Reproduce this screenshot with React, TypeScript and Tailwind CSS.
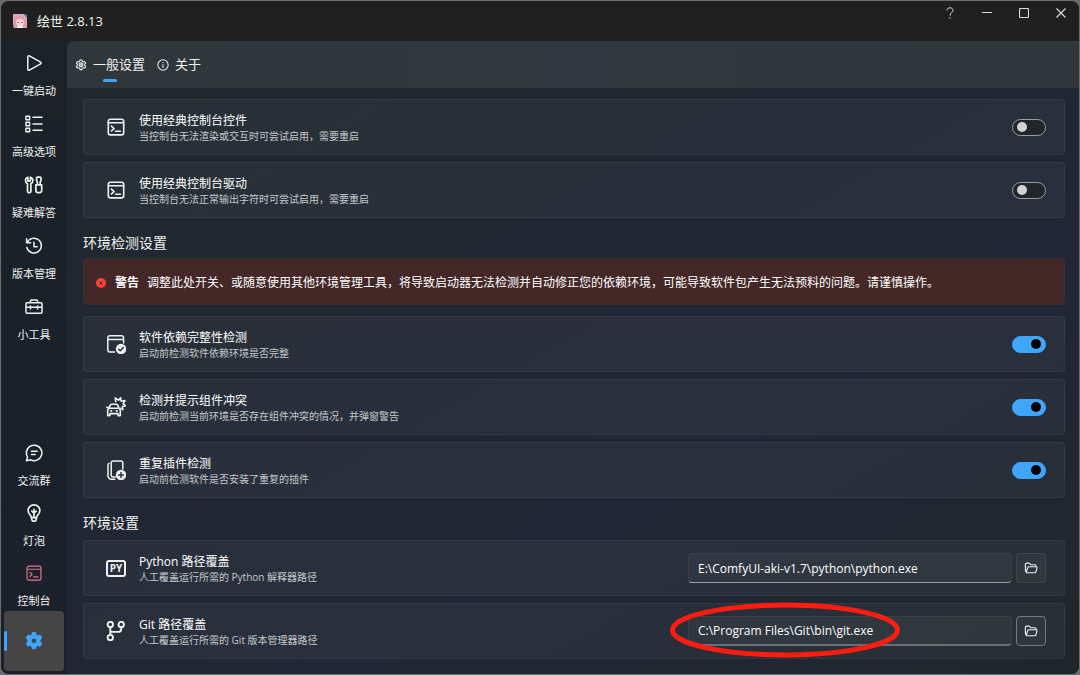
import { useState } from 'react';
import type { ReactNode } from 'react';

interface IconProps {
    children: ReactNode;
    className?: string;
    width?: number;
}

function Icon({ children, className = 'size-5', width = 1.5 }: IconProps) {
    return (
        <svg
            viewBox="0 0 20 20"
            className={className}
            fill="none"
            stroke="currentColor"
            strokeWidth={width}
            strokeLinecap="round"
            strokeLinejoin="round"
            aria-hidden="true"
        >
            {children}
        </svg>
    );
}

const PlayIcon = () => (
    <Icon>
        <path d="M3.8 3.7v12.6c0 .8.9 1.3 1.6.9l11.2-6.3c.7-.4.7-1.4 0-1.8L5.400 2.800c-.7-.4-1.600.1-1.600.9z" />
    </Icon>
);

const ListIcon = () => (
    <Icon>
        <rect x="2" y="2.2" width="3.6" height="3.6" />
        <rect x="2" y="8.2" width="3.6" height="3.6" />
        <rect x="2" y="14.2" width="3.6" height="3.6" />
        <path d="M9 3.2h9M9 10h9M9 16.2h9" />
    </Icon>
);

const ToolsIcon = () => (
    <Icon width={1.7}>
        <path d="M3.800 2.200v3.300c0 .4.3.7.7.7h1.200c.4 0 .7-.3.7-.7V2.200c1.700.6 2.500 1.800 2.500 3.400 0 1.500-.8 2.600-2 3.200v7.400c0 .9-.800 1.500-1.700 1.500s-1.700-.6-1.700-1.500V8.800c-1.200-.6-2-1.700-2-3.200 0-1.600.6-2.800 2.300-3.400z" />
        <path d="M12.600 3c0-.5.4-.9.9-.9h2.600c.5 0 .9.4.9.9v2.600l-.8 1.600v2.600h-2.800V7.200l-.8-1.600zM11.900 9.900h5.800v5.700c0 1.200-.9 2.100-2.100 2.100H14c-1.200 0-2.100-.9-2.100-2.100z" />
    </Icon>
);

const HistoryIcon = () => (
    <Icon>
        <path d="M3.200 6.600A7.400 7.400 0 1 1 2.800 11.500M2.600 2.800v4h4M10 6.300v4.400h3.200" />
    </Icon>
);

const ToolboxIcon = () => (
    <Icon>
        <path d="M2 6.800c0-.6.4-1 1-1h14c.6 0 1 .4 1 1v8.400c0 .6-.4 1-1 1H3c-.6 0-1-.4-1-1zM6.400 5.600V4c0-.6.4-1 1-1h5.200c.6 0 1 .4 1 1v1.600M2 10.300h16M6.400 9v3M13.600 9v3" />
    </Icon>
);

const ChatIcon = () => (
    <Icon>
        <path d="M10.300 2.200a7.700 7.700 0 1 1-3.500 14.600l-4.300 1 1-4A7.700 7.700 0 0 1 10.300 2.200zM7.400 8.300h5.800M7.400 11.500h3.800" />
    </Icon>
);

const BulbIcon = () => (
    <Icon width={1.700}>
        <path d="M10 1.900c-3.500 0-5.900 2.600-5.900 5.700 0 2 1 3.400 2.300 4.700.5.500.7 1 .9 1.700l.6 2.900c.1.700.6 1.200 1.300 1.200h1.600c.7 0 1.200-.5 1.300-1.200l.6-2.900c.2-.7.4-1.200.9-1.700 1.300-1.300 2.300-2.700 2.300-4.700 0-3.100-2.400-5.700-5.900-5.700zM7.400 14.600h5.200M10 14V6.300M7.800 8.200 10 10l2.200-1.800" />
    </Icon>
);

const ConsoleIcon = ({ className = 'size-5', width = 1.600 }: { className?: string; width?: number }) => (
    <Icon className={className} width={width}>
        <rect x="2.300" y="2.300" width="15.400" height="15.600" rx="2.200" />
        <path d="M2.300 5.800h15.400M5.400 9.200 8 11.600l-2.600 2.400M9.600 14.300h4.800" />
    </Icon>
);

const GEAR_PATH =
    'M8.300 1.600h3.400l.5 2.400 1.600.9 2.300-.8 1.700 2.900-1.800 1.700v1.900l1.800 1.700-1.700 2.900-2.300-.8-1.600.9-.5 2.400H8.300l-.5-2.400-1.600-.9-2.300.8-1.700-2.900L4 10.600V8.700L2.200 7l1.700-2.900 2.300.8 1.600-.9z';

const GearIcon = () => (
    <Icon className="size-3" width={1.7}>
        <path d={GEAR_PATH} />
        <circle cx="10" cy="9.700" r="3.200" />
        <path d="M10 6v7.400M6.800 8l6.400 3.400M13.200 8l-6.400 3.400" strokeWidth="1" />
    </Icon>
);

const GearFilledIcon = () => (
    <svg viewBox="0 0 20 20" className="size-5" aria-hidden="true">
        <path
            d={`${GEAR_PATH}M10 6.900a2.800 2.800 0 1 0 0 5.600 2.800 2.800 0 0 0 0-5.600z`}
            fill="currentColor"
            fillRule="evenodd"
            stroke="currentColor"
            strokeWidth="1"
            strokeLinejoin="round"
        />
    </svg>
);

const InfoIcon = () => (
    <Icon className="size-3" width={1.700}>
        <circle cx="10" cy="10" r="8.600" />
        <path d="M10 9.200v5M10 6v.2" />
    </Icon>
);

const WindowCheckIcon = () => (
    <Icon>
        <path d="M8.500 18H4c-1.200 0-2.200-1-2.200-2.200V3.900c0-1.200 1-2.200 2.200-2.200h11.400c1.200 0 2.200 1 2.200 2.200V9M1.800 5.500h15.800" />
        <circle cx="15" cy="15" r="5.200" fill="currentColor" stroke="none" />
        <path d="m12.700 15.200 1.600 1.500 3-3.100" stroke="#293037" />
    </Icon>
);

const CollisionIcon = () => (
    <Icon width={1.600}>
        <path d="M1.700 18.600v-5.200c0-1 .5-1.700 1.300-2l1.100-3c.3-.7.900-1.100 1.600-1.100h4.600c.7 0 1.300.4 1.600 1.100l1.100 3c.8.3 1.300 1 1.300 2v5.200h-2.200v-2H3.900v2zM3 11.200h10M4.800 13.900h.8M10.400 13.900h.8M.8 10.200l1.100.4" />
        <path d="M9.800 4.600 9.200 1l3.400 2.200L14.600.8l.6 3.400 3.800-.6-1.900 3.200 2.300 1.900-3 .8.500 3.100-1.900-1.300" />
    </Icon>
);

const CopyAddIcon = () => (
    <Icon>
        <path d="M9.400 17H7.200c-1.100 0-2-.9-2-2V3c0-1.100.9-2 2-2h7.600c1.100 0 2 .9 2 2v6" />
        <path d="M3 3.400c-.7.400-1 1-1 1.800v10.300c0 2.200 1.600 3.700 3.700 3.700h3.100" />
        <circle cx="15" cy="15" r="5.200" fill="currentColor" stroke="none" />
        <path d="M15 12.600v4.800M12.600 15h4.800" stroke="#293037" />
    </Icon>
);

const PythonIcon = () => (
    <span
        aria-hidden="true"
        className="flex h-[17px] w-5 items-center justify-center rounded-[3px] border-2 border-current text-[10px] leading-none font-bold"
    >
        PY
    </span>
);

const BranchIcon = () => (
    <Icon width={1.900}>
        <circle cx="4.300" cy="3.600" r="2.700" />
        <circle cx="15.200" cy="3.600" r="2.700" />
        <circle cx="4.300" cy="16.600" r="2.700" />
        <path d="M4.300 6.300v7.600M15.200 6.300v1.600c0 2-1.200 3-3 3H4.300" />
    </Icon>
);

const FolderIcon = () => (
    <Icon className="size-3.5" width={1.600}>
        <path d="M3.500 16.500 2 14V5c0-1.100.9-2 2-2h3.400l2.300 2.300h5.600c1.100 0 2 .9 2 2v1M4 16.800h11.300c.8 0 1.500-.5 1.700-1.300l1.600-5.200c.3-1-.4-2-1.500-2H7c-.8 0-1.500.5-1.700 1.300L3.400 15.400c-.2.700.1 1.300.6 1.400z" />
    </Icon>
);

function Avatar() {
    return (
        <svg viewBox="0 0 14 14" className="size-3.5" aria-hidden="true">
            <rect width="14" height="14" rx="1" fill="#dcaebb" />
            <path d="M1 14C0 6 2 1 7 1s7 5 6 13z" fill="#e598ab" />
            <path d="M10.500 0H14v4zM0 10l1.500 4H0z" fill="#3d6f9c" />
            <path d="M3 8c0-2 1-3 2-3l1 1 2-2 3 3v2c0 2-2 4-4 4S3 10 3 8z" fill="#f3d3d2" />
            <path d="M4.500 8.500h1.500M8.500 8.500H10" stroke="#9c5068" strokeWidth="1" />
            <path d="M4 14c0-2 1-2.500 3-2.500s3 .5 3 2.500z" fill="#f2f2f6" />
        </svg>
    );
}

interface NavItemProps {
    icon: ReactNode;
    label: string;
    danger?: boolean;
}

function NavItem({ icon, label, danger = false }: NavItemProps) {
    return (
        <button type="button" className="flex h-[60px] w-full flex-col items-center gap-2.5 pt-3">
            <span className={danger ? 'text-[#d9788c]' : ''}>{icon}</span>
            <span className="text-[11px] leading-4">{label}</span>
        </button>
    );
}

interface CardProps {
    id: string;
    icon: ReactNode;
    title: string;
    description: string;
    children: ReactNode;
}

function Card({ id, icon, title, description, children }: CardProps) {
    return (
        <div className="flex h-14 items-center gap-[13px] rounded border border-white/5 bg-white/4 pr-[18px] pl-[22px]">
            {icon}
            <label htmlFor={id} className="flex-1 pt-[3px]">
                <span className="block text-xs leading-4 text-white">{title}</span>
                <span className="block text-[10px] leading-[15px] text-[#c5c8cb]">{description}</span>
            </label>
            {children}
        </div>
    );
}

interface SwitchCardProps {
    id: string;
    icon: ReactNode;
    title: string;
    description: string;
    defaultChecked?: boolean;
}

function SwitchCard({ defaultChecked = false, ...rest }: SwitchCardProps) {
    const [checked, setChecked] = useState(defaultChecked);

    return (
        <Card {...rest}>
            <input
                id={rest.id}
                type="checkbox"
                role="switch"
                checked={checked}
                onChange={e => setChecked(e.target.checked)}
                className="flex h-[17px] w-[34px] appearance-none items-center rounded-full border border-[#9b9ea1] bg-[#20262b] px-1 before:size-2.5 before:rounded-full before:bg-[#d0d2d3] before:content-[''] checked:justify-end checked:border-[#3ea6ff] checked:bg-[#3ea6ff] checked:before:bg-black"
            />
        </Card>
    );
}

interface PathCardProps {
    id: string;
    icon: ReactNode;
    title: string;
    description: string;
    path: string;
    highlighted?: boolean;
}

function PathCard({ path, highlighted = false, ...rest }: PathCardProps) {
    const [value, setValue] = useState(path);

    return (
        <Card {...rest}>
            <div className="relative flex w-[358px] gap-1">
                <input
                    id={rest.id}
                    type="text"
                    value={value}
                    onChange={e => setValue(e.target.value)}
                    className={`h-[30px] min-w-0 flex-1 rounded border border-white/5 bg-white/4 px-[9px] text-xs text-white outline-none ${
                        highlighted ? 'border-b-2 border-b-[#6a6e76]' : 'border-b-[#999ca2]'
                    }`}
                />
                <button
                    type="button"
                    aria-label="浏览"
                    className={`flex size-[30px] items-center justify-center rounded border bg-white/4 ${
                        highlighted ? 'border-[#777b7f]' : 'border-white/7'
                    }`}
                >
                    <FolderIcon />
                </button>
                {highlighted && (
                    <svg
                        viewBox="0 0 230 56"
                        className="pointer-events-none absolute -top-3.5 -left-[18px] h-14 w-[230px]"
                        aria-hidden="true"
                    >
                        <ellipse cx="115" cy="28" rx="112.500" ry="25" fill="none" stroke="#ff1c10" strokeWidth="5" />
                    </svg>
                )}
            </div>
        </Card>
    );
}

function TitleBar() {
    return (
        <header className="flex h-10 shrink-0 justify-between bg-[#202020]">
            <div className="flex items-center gap-2.5 pl-3">
                <Avatar />
                <h1 className="text-[13px] leading-5">绘世 2.8.13</h1>
            </div>
            <div className="flex h-6 text-[#d8d8d8]">
                <button type="button" aria-label="帮助" className="flex w-[37px] items-center justify-center">
                    <svg viewBox="0 0 8 12" className="h-3 w-2" fill="none" stroke="currentColor">
                        <path d="M1 3.400C1 1.600 2.200.8 4 .8s3 1 3 2.500C7 5.600 4 5.700 4 8.600M4 10.200v1.300" />
                    </svg>
                </button>
                <button type="button" aria-label="最小化" className="flex w-[37px] items-center justify-center">
                    <svg viewBox="0 0 10 10" className="size-2.5" stroke="currentColor">
                        <path d="M0 4.500h10" />
                    </svg>
                </button>
                <button type="button" aria-label="最大化" className="flex w-[37px] items-center justify-center">
                    <svg viewBox="0 0 10 10" className="size-2.5" stroke="currentColor" fill="none">
                        <rect x=".5" y=".5" width="9" height="9" rx="1" strokeWidth="1.200" />
                    </svg>
                </button>
                <button type="button" aria-label="关闭" className="flex w-[37px] items-center justify-center">
                    <svg viewBox="0 0 10 10" className="size-2.5" stroke="currentColor" strokeWidth="1.200">
                        <path d="m.5.500 9 9M9.500.5l-9 9" />
                    </svg>
                </button>
            </div>
        </header>
    );
}

function Sidebar() {
    return (
        <nav className="flex w-[66px] shrink-0 flex-col justify-between bg-linear-to-b from-[#1b2228] to-[#1b202b] pb-[3px]">
            <div className="flex flex-col gap-px">
                <NavItem icon={<PlayIcon />} label="一键启动" />
                <NavItem icon={<ListIcon />} label="高级选项" />
                <NavItem icon={<ToolsIcon />} label="疑难解答" />
                <NavItem icon={<HistoryIcon />} label="版本管理" />
                <NavItem icon={<ToolboxIcon />} label="小工具" />
            </div>
            <div className="flex flex-col">
                <NavItem icon={<ChatIcon />} label="交流群" />
                <NavItem icon={<BulbIcon />} label="灯泡" />
                <NavItem icon={<ConsoleIcon className="m-px size-[18px]" width={1.300} />} label="控制台" danger />
                <button
                    type="button"
                    aria-label="设置"
                    className="relative mx-[3px] flex h-[60px] items-center justify-center rounded bg-[#454545] text-[#3ea6ff]"
                >
                    <span className="absolute left-0 h-5 w-[3px] rounded-full bg-[#3ea6ff]" />
                    <GearFilledIcon />
                </button>
            </div>
        </nav>
    );
}

export default function App() {
    return (
        <div className="h-screen bg-[#6d6c6d] p-px font-['Open_Sans','Noto_Sans_CJK_SC',sans-serif] text-[#f0f1f1]">
            <div className="flex h-full flex-col overflow-hidden rounded-lg bg-[#202020]">
                <TitleBar />
                <div className="flex min-h-0 flex-1 bg-[#1b2228]">
                    <Sidebar />
                    <main className="flex min-w-0 flex-1 flex-col overflow-hidden rounded-tl-lg bg-linear-150 from-[#20282d] via-[#212736] via-65% to-[#20272b]">
                        <div className="flex h-[47px] shrink-0 gap-3 bg-linear-to-r from-[#30373a] via-[#30373e] to-[#30373a] pl-2">
                            <button type="button" className="relative flex items-center gap-1.5 text-[13px]">
                                <GearIcon />
                                一般设置
                                <span className="absolute inset-x-0 bottom-1.5 mx-auto h-[3px] w-3.5 rounded-full bg-[#3ea6ff]" />
                            </button>
                            <button type="button" className="flex items-center gap-1.5 text-[13px]">
                                <InfoIcon />
                                关于
                            </button>
                        </div>
                        <div className="flex min-h-0 flex-1 flex-col pt-[11px] pr-3.5 pl-4">
                            <section className="flex flex-col gap-[7px]">
                                <SwitchCard
                                    id="classic-control"
                                    icon={<ConsoleIcon />}
                                    title="使用经典控制台控件"
                                    description="当控制台无法渲染或交互时可尝试启用，需要重启"
                                />
                                <SwitchCard
                                    id="classic-driver"
                                    icon={<ConsoleIcon />}
                                    title="使用经典控制台驱动"
                                    description="当控制台无法正常输出字符时可尝试启用，需要重启"
                                />
                            </section>

                            <h2 className="pt-[15px] pb-[5px] text-sm leading-5">环境检测设置</h2>
                            <div
                                role="alert"
                                className="mb-[11px] flex h-[47px] shrink-0 items-center rounded border border-[#343033] bg-[#442727] pt-0.5 pl-3 text-xs text-white"
                            >
                                <svg viewBox="0 0 10 10" className="size-2.5" aria-hidden="true">
                                    <circle cx="5" cy="5" r="5" fill="#f8433a" />
                                    <path d="m3.500 3.500 3 3M6.500 3.500l-3 3" stroke="#442727" strokeWidth="1" />
                                </svg>
                                <strong className="pr-2 pl-[9px]">警告</strong>
                                <p>
                                    调整此处开关、或随意使用其他环境管理工具，将导致启动器无法检测并自动修正您的依赖环境，可能导致软件包产生无法预料的问题。请谨慎操作。
                                </p>
                            </div>
                            <section className="flex flex-col gap-[7px]">
                                <SwitchCard
                                    id="dependency-check"
                                    icon={<WindowCheckIcon />}
                                    title="软件依赖完整性检测"
                                    description="启动前检测软件依赖环境是否完整"
                                    defaultChecked
                                />
                                <SwitchCard
                                    id="conflict-check"
                                    icon={<CollisionIcon />}
                                    title="检测并提示组件冲突"
                                    description="启动前检测当前环境是否存在组件冲突的情况，并弹窗警告"
                                    defaultChecked
                                />
                                <SwitchCard
                                    id="duplicate-check"
                                    icon={<CopyAddIcon />}
                                    title="重复插件检测"
                                    description="启动前检测软件是否安装了重复的插件"
                                    defaultChecked
                                />
                            </section>

                            <h2 className="pt-[15px] pb-[7px] text-sm leading-5">环境设置</h2>
                            <section className="flex flex-col gap-[7px]">
                                <PathCard
                                    id="python-path"
                                    icon={<PythonIcon />}
                                    title="Python 路径覆盖"
                                    description="人工覆盖运行所需的 Python 解释器路径"
                                    path="E:\ComfyUI-aki-v1.7\python\python.exe"
                                />
                                <PathCard
                                    id="git-path"
                                    icon={<BranchIcon />}
                                    title="Git 路径覆盖"
                                    description="人工覆盖运行所需的 Git 版本管理器路径"
                                    path="C:\Program Files\Git\bin\git.exe"
                                    highlighted
                                />
                            </section>
                        </div>
                    </main>
                </div>
            </div>
        </div>
    );
}
